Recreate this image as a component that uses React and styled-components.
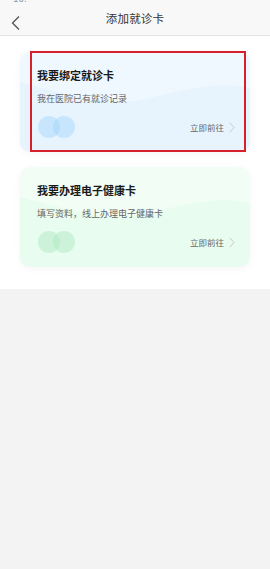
import React from "react";
import styled, { createGlobalStyle } from "styled-components";

const GlobalStyle = createGlobalStyle`
  html, body {
    margin: 0;
    padding: 0;
    background: #f3f3f3;
    font-family: "Noto Sans CJK SC", "Noto Sans", sans-serif;
  }
`;

const Page = styled.div`
  width: 270px;
  min-height: 569px;
  background: #f3f3f3;
`;

const Header = styled.div`
  position: relative;
  height: 35px;
  background: #f8f8f8;
  border-bottom: 1px solid #e4e4e4;
  display: flex;
  align-items: center;
  justify-content: center;
  overflow: hidden;
`;

const StatusText = styled.div`
  position: absolute;
  left: 13px;
  top: -10px;
  font-size: 10px;
  color: #999;
`;

const Back = styled.div`
  position: absolute;
  left: 9px;
  top: 12px;
  width: 14px;
  height: 16px;
`;

const Title = styled.div`
  font-size: 11.5px;
  color: #333;
  letter-spacing: 0.2px;
`;

const Body = styled.div`
  background: #fff;
  padding: 16px 20px 22px;
  display: flex;
  flex-direction: column;
  gap: 15px;
`;

const Card = styled.div`
  position: relative;
  height: 100px;
  border-radius: 10px;
  background: ${(p) => p.$bg};
  box-shadow: 0 2px 8px rgba(0, 0, 0, 0.04);
`;

const Wave = styled.svg`
  position: absolute;
  left: 0;
  top: 0;
  width: 100%;
  height: 100%;
  border-radius: 10px;
`;

const Content = styled.div`
  position: relative;
  padding: 16px 15px 0 17px;
  display: flex;
  flex-direction: column;
`;

const CardTitle = styled.div`
  font-size: 11px;
  line-height: 14px;
  font-weight: 700;
  color: #1a1a1a;
`;

const CardSub = styled.div`
  margin-top: 11px;
  font-size: 9px;
  line-height: 12px;
  color: #666;
`;

const Bottom = styled.div`
  margin-top: 11px;
  height: 22px;
  display: flex;
  align-items: center;
  justify-content: space-between;
`;

const Dots = styled.div`
  display: flex;
  padding-left: 1px;
`;

const Dot = styled.div`
  width: 22px;
  height: 22px;
  border-radius: 50%;
  background: ${(p) => p.$color};
  & + & {
    margin-left: -7px;
  }
`;

const Go = styled.div`
  display: flex;
  align-items: center;
  gap: 5px;
  font-size: 8.5px;
  color: #666;
`;

const Highlight = styled.div`
  position: absolute;
  left: 10px;
  right: 4px;
  top: -1px;
  bottom: 0;
  border: 2px solid #d8202c;
  pointer-events: none;
`;

const cards = [
  {
    id: 1,
    title: "我要绑定就诊卡",
    sub: "我在医院已有就诊记录",
    bg: "#f0f8ff",
    wave: "#e7f4fe",
    dot: "rgba(160, 212, 252, 0.45)",
    marked: true,
  },
  {
    id: 2,
    title: "我要办理电子健康卡",
    sub: "填写资料，线上办理电子健康卡",
    bg: "#f1fdf5",
    wave: "#e8fcef",
    dot: "rgba(170, 232, 190, 0.45)",
    marked: false,
  },
];

function Chevron({ color = "#555", w = 14, h = 16, sw = 1.3 }) {
  return (
    <svg width={w} height={h} viewBox="0 0 14 16">
      <path d="M10 1.5 L3.5 8 L10 14.5" fill="none" stroke={color} strokeWidth={sw} />
    </svg>
  );
}

function HealthCard({ item }) {
  return (
    <Card $bg={item.bg}>
      <Wave viewBox="0 0 230 100" preserveAspectRatio="none">
        <path
          d="M0 30 C40 40 80 55 120 48 C160 40 190 28 230 36 L230 100 L0 100 Z"
          fill={item.wave}
        />
      </Wave>
      <Content>
        <CardTitle>{item.title}</CardTitle>
        <CardSub>{item.sub}</CardSub>
        <Bottom>
          <Dots>
            <Dot $color={item.dot} />
            <Dot $color={item.dot} />
          </Dots>
          <Go>
            立即前往
            <svg width="6" height="11" viewBox="0 0 6 11">
              <path d="M0.8 0.8 L5 5.5 L0.8 10.2" fill="none" stroke="#c4c4c4" strokeWidth="0.9" />
            </svg>
          </Go>
        </Bottom>
      </Content>
      {item.marked && <Highlight />}
    </Card>
  );
}

export default function App() {
  return (
    <Page>
      <GlobalStyle />
      <Header>
        <StatusText>10:</StatusText>
        <Back>
          <Chevron />
        </Back>
        <Title>添加就诊卡</Title>
      </Header>
      <Body>
        {cards.map((item) => (
          <HealthCard key={item.id} item={item} />
        ))}
      </Body>
    </Page>
  );
}
